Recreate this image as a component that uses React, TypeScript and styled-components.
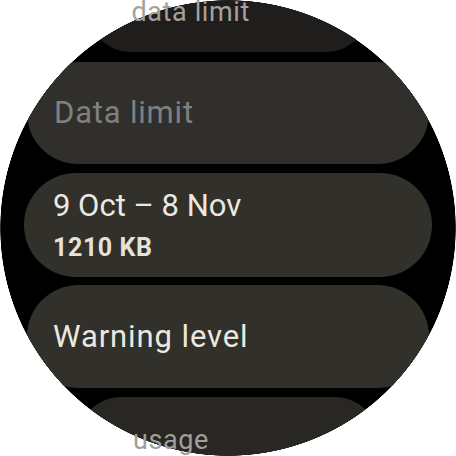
import React from 'react';
import styled, { createGlobalStyle } from 'styled-components';

const GlobalStyle = createGlobalStyle`
  html, body {
    margin: 0;
    padding: 0;
    background: #ffffff;
    overflow: hidden;
  }
  * {
    box-sizing: border-box;
  }
`;

// round watch face: black disc on white
const Screen = styled.div`
  width: 456px;
  height: 456px;
  overflow: hidden;
  background: radial-gradient(circle 228px at 50% 50%, #000000 227.4px, #ffffff 228px);
  font-family: Roboto, "Noto Sans", sans-serif;
`;

const List = styled.div`
  display: flex;
  flex-direction: column;
  align-items: center;
  gap: 9px;
  margin-top: -28px;
`;

// background is pinned to the viewport so the chip is cut by the round display
const Chip = styled.div<{ $width: number; $height: number; $bg: string; $pad: number; $gapTop?: number }>`
  display: flex;
  flex-direction: column;
  justify-content: center;
  flex-shrink: 0;
  width: ${p => p.$width}px;
  height: ${p => p.$height}px;
  margin-top: ${p => p.$gapTop ?? 0}px;
  padding-left: ${p => p.$pad}px;
  border-radius: ${p => p.$height / 2}px;
  background: radial-gradient(circle 228px at 228px 228px, ${p => p.$bg} 227.4px, transparent 228px) fixed;
`;

const Label = styled.div<{ $size: number; $color: string; $spacing?: number }>`
  font-size: ${p => p.$size}px;
  line-height: 1.2;
  color: ${p => p.$color};
  letter-spacing: ${p => p.$spacing ?? 0.4}px;
  white-space: nowrap;
`;

const Secondary = styled.div`
  font-size: 25px;
  font-weight: 700;
  line-height: 1.2;
  color: #e6e2d9;
  letter-spacing: 0.6px;
  margin-top: 8px;
`;

export default function App() {
  return (
    <>
      <GlobalStyle />
      <Screen>
        <List>
          <Chip $width={277} $height={80} $bg="#1f1e1c" $pad={42}>
            <Label $size={27} $color="#a3a19c" $spacing={0.6}>data limit</Label>
          </Chip>
          <Chip $width={402} $height={102} $bg="#302f2b" $pad={27} $gapTop={1}>
            <Label $size={31} $color="#7e8083" $spacing={0.8}>Data limit</Label>
          </Chip>
          <Chip $width={408} $height={104} $bg="#31302b" $pad={29}>
            <Label $size={31} $color="#ece8e0" $spacing={0}>9 Oct – 8 Nov</Label>
            <Secondary>1210 KB</Secondary>
          </Chip>
          <Chip $width={402} $height={103} $bg="#31302b" $pad={26} $gapTop={-1}>
            <Label $size={31} $color="#ece8e0" $spacing={0.9}>Warning level</Label>
          </Chip>
          <Chip $width={300} $height={86} $bg="#282723" $pad={55}>
            <Label $size={27} $color="#a09f9a" $spacing={0.6}>usage</Label>
          </Chip>
        </List>
      </Screen>
    </>
  );
}
